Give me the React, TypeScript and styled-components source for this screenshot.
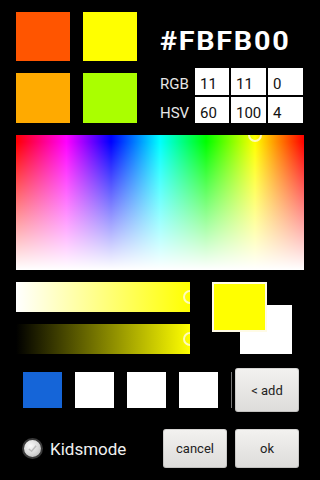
import styled, { createGlobalStyle } from 'styled-components';

const GlobalStyle = createGlobalStyle`
  html, body {
    margin: 0;
    padding: 0;
    background: #000;
  }
  body {
    font-family: Roboto, 'Liberation Sans', sans-serif;
  }
`;

const Screen = styled.div`
  width: 320px;
  height: 480px;
  box-sizing: border-box;
  padding: 12px 16px 0;
  background: #000;
  display: flex;
  flex-direction: column;
  overflow: hidden;
`;

const TopRow = styled.div`
  display: flex;
`;

const SwatchGrid = styled.div`
  display: grid;
  grid-template-columns: 54px 54px;
  grid-template-rows: 49px 50px;
  gap: 12px 13px;
`;

const Swatch = styled.div<{ $color: string }>`
  background: ${(p) => p.$color};
`;

const InfoPanel = styled.div`
  margin-left: 23px;
  display: flex;
  flex-direction: column;
`;

const HexLabel = styled.div`
  margin-top: 17px;
  height: 25px;
  font-size: 25px;
  line-height: 25px;
  font-weight: bold;
  letter-spacing: 1.5px;
  color: #fff;
  white-space: nowrap;
  transform: scaleX(1.15);
  transform-origin: left center;
`;

const ValueTable = styled.div`
  margin-top: 14px;
  display: grid;
  grid-template-columns: 33px 34px 35px 35px;
  grid-template-rows: 27px 26px;
  gap: 2px;
`;

const RowLabel = styled.div`
  display: flex;
  align-items: center;
  padding-top: 5px;
  box-sizing: border-box;
  font-size: 15px;
  color: #e6e6e6;
`;

const ValueCell = styled.div`
  display: flex;
  align-items: center;
  padding: 5px 0 0 5px;
  box-sizing: border-box;
  background: #fff;
  color: #111;
  font-size: 15px;
`;

const Spectrum = styled.div`
  position: relative;
  margin-top: 12px;
  height: 135px;
  overflow: hidden;
  background: linear-gradient(to bottom, rgba(255, 255, 255, 0) 5%, #fff),
    linear-gradient(
      to right,
      #f00,
      #f0f 17.5%,
      #00f 33%,
      #0ff 50%,
      #0f0 66%,
      #ff0 83%,
      #f00
    );
`;

const Marker = styled.div<{ $left: number; $top: number }>`
  position: absolute;
  left: ${(p) => p.$left}px;
  top: ${(p) => p.$top}px;
  width: 14px;
  height: 14px;
  border-radius: 50%;
  border: 2px solid rgba(255, 250, 220, 0.85);
  box-sizing: border-box;
`;

const SliderRow = styled.div`
  margin-top: 12px;
  display: flex;
`;

const SliderColumn = styled.div`
  width: 174px;
  display: flex;
  flex-direction: column;
  gap: 12px;
`;

const SliderBar = styled.div<{ $from: string; $to: string }>`
  position: relative;
  height: 30px;
  overflow: hidden;
  background: linear-gradient(to right, ${(p) => p.$from}, ${(p) => p.$to});
`;

const Preview = styled.div`
  position: relative;
  margin-left: 22px;
  width: 81px;
  height: 72px;
`;

const NewColor = styled.div<{ $color: string }>`
  position: absolute;
  left: 0;
  top: 0;
  z-index: 1;
  width: 55px;
  height: 50px;
  box-sizing: border-box;
  border: 2px solid #fffbe6;
  background: ${(p) => p.$color};
`;

const OldColor = styled.div<{ $color: string }>`
  position: absolute;
  left: 28px;
  top: 23px;
  width: 52px;
  height: 49px;
  background: ${(p) => p.$color};
`;

const PaletteRow = styled.div`
  margin-top: 14px;
  display: flex;
  align-items: center;
  padding-left: 7px;
`;

const PaletteSlots = styled.div`
  display: flex;
  gap: 13px;
`;

const PaletteSlot = styled.div<{ $color: string }>`
  width: 39px;
  height: 36px;
  background: ${(p) => p.$color};
`;

const Divider = styled.div`
  margin-left: 13px;
  width: 1px;
  height: 36px;
  background: #777;
`;

const Button = styled.button<{ $height: number }>`
  width: 64px;
  height: ${(p) => p.$height}px;
  margin: 0;
  padding: 0;
  border: none;
  border-radius: 3px;
  background: linear-gradient(to bottom, #f3f2f0, #dddcda);
  box-shadow: inset 0 0 0 1px rgba(0, 0, 0, 0.12);
  color: #222;
  font-family: Roboto, 'Liberation Sans', sans-serif;
  font-size: 13px;
`;

const AddButton = styled(Button)`
  margin-left: 3px;
`;

const FooterRow = styled.div`
  margin-top: 17px;
  display: flex;
  align-items: center;
`;

const CheckCircle = styled.div`
  margin-left: 6px;
  width: 21px;
  height: 21px;
  box-sizing: border-box;
  border-radius: 50%;
  border: 2px solid #3a3a3a;
  background: radial-gradient(circle at 40% 35%, #fafafa, #d6d6d6 55%, #a8a8a8);
  display: flex;
  align-items: center;
  justify-content: center;
`;

const CheckLabel = styled.span`
  margin-left: 7px;
  font-size: 17px;
  color: #f0f0f0;
`;

const ButtonGroup = styled.div`
  margin-left: auto;
  margin-right: 5px;
  display: flex;
  gap: 8px;
`;

const swatches = ['#ff5500', '#ffff00', '#ffaa00', '#aaff00'];
const palette = ['#1565d8', '#ffffff', '#ffffff', '#ffffff'];

export default function App() {
  return (
    <>
      <GlobalStyle />
      <Screen>
        <TopRow>
          <SwatchGrid>
            {swatches.map((c, i) => (
              <Swatch key={i} $color={c} />
            ))}
          </SwatchGrid>
          <InfoPanel>
            <HexLabel>#FBFB00</HexLabel>
            <ValueTable>
              <RowLabel>RGB</RowLabel>
              <ValueCell>11</ValueCell>
              <ValueCell>11</ValueCell>
              <ValueCell>0</ValueCell>
              <RowLabel>HSV</RowLabel>
              <ValueCell>60</ValueCell>
              <ValueCell>100</ValueCell>
              <ValueCell>4</ValueCell>
            </ValueTable>
          </InfoPanel>
        </TopRow>

        <Spectrum>
          <Marker $left={232} $top={-7} />
        </Spectrum>

        <SliderRow>
          <SliderColumn>
            <SliderBar $from="#ffffff" $to="#ffff00">
              <Marker $left={167} $top={8} />
            </SliderBar>
            <SliderBar $from="#000000" $to="#ffff00">
              <Marker $left={167} $top={8} />
            </SliderBar>
          </SliderColumn>
          <Preview>
            <NewColor $color="#ffff00" />
            <OldColor $color="#ffffff" />
          </Preview>
        </SliderRow>

        <PaletteRow>
          <PaletteSlots>
            {palette.map((c, i) => (
              <PaletteSlot key={i} $color={c} />
            ))}
          </PaletteSlots>
          <Divider />
          <AddButton $height={44}>&lt; add</AddButton>
        </PaletteRow>

        <FooterRow>
          <CheckCircle>
            <svg width="11" height="11" viewBox="0 0 12 12">
              <path d="M2 6.5 L5 9 L10 3" fill="none" stroke="#bdbdbd" strokeWidth="1.6" />
            </svg>
          </CheckCircle>
          <CheckLabel>Kidsmode</CheckLabel>
          <ButtonGroup>
            <Button $height={39}>cancel</Button>
            <Button $height={39}>ok</Button>
          </ButtonGroup>
        </FooterRow>
      </Screen>
    </>
  );
}
